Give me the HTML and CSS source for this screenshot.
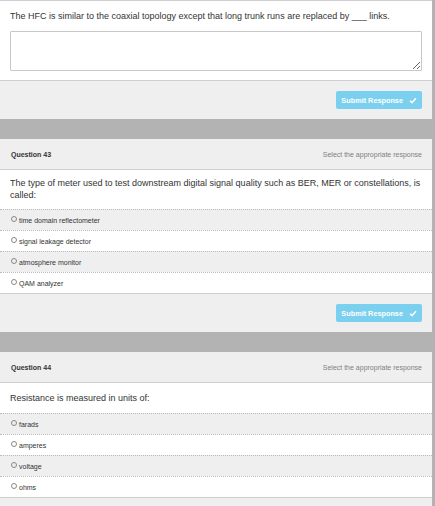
FILE: index.html
```html
<!DOCTYPE html>
<html lang="en">
<head>
  <meta charset="UTF-8">
  <title>Quiz</title>
  <link rel="stylesheet" href="styles.css">
</head>
<body>
  <div class="page">
    <div class="card card-cut">
      <div class="prompt prompt-fill">The HFC is similar to the coaxial topology except that long trunk runs are replaced by ___ links.</div>
      <div class="answer-box">
        <textarea class="answer"></textarea>
      </div>
      <div class="card-foot">
        <button class="btn">Submit Response
          <svg width="8" height="7" viewBox="0 0 8 7"><path d="M1 3.8 L3 5.6 L7 1.2" fill="none" stroke="white" stroke-width="1.5"/></svg>
        </button>
      </div>
    </div>

    <div class="card">
      <div class="card-head">
        <span class="qnum">Question 43</span>
        <span class="hint">Select the appropriate response</span>
      </div>
      <div class="prompt prompt-long">The type of meter used to test downstream digital signal quality such as BER, MER or constellations, is called:</div>
      <ul class="options">
        <li><span class="radio"></span>time domain reflectometer</li>
        <li><span class="radio"></span>signal leakage detector</li>
        <li><span class="radio"></span>atmosphere monitor</li>
        <li><span class="radio"></span>QAM analyzer</li>
      </ul>
      <div class="card-foot">
        <button class="btn">Submit Response
          <svg width="8" height="7" viewBox="0 0 8 7"><path d="M1 3.8 L3 5.6 L7 1.2" fill="none" stroke="white" stroke-width="1.5"/></svg>
        </button>
      </div>
    </div>

    <div class="card">
      <div class="card-head">
        <span class="qnum">Question 44</span>
        <span class="hint">Select the appropriate response</span>
      </div>
      <div class="prompt">Resistance is measured in units of:</div>
      <ul class="options">
        <li><span class="radio"></span>farads</li>
        <li><span class="radio"></span>amperes</li>
        <li><span class="radio"></span>voltage</li>
        <li><span class="radio"></span>ohms</li>
      </ul>
      <div class="card-foot">
        <button class="btn">Submit Response
          <svg width="8" height="7" viewBox="0 0 8 7"><path d="M1 3.8 L3 5.6 L7 1.2" fill="none" stroke="white" stroke-width="1.5"/></svg>
        </button>
      </div>
    </div>
  </div>
</body>
</html>
```

FILE: styles.css
```css
body {
  margin: 0;
  background: #b3b3b3;
  font-family: 'Liberation Sans', Arial, sans-serif;
  color: #333;
}
.page {
  width: 432px;
}
.card {
  background: #efefef;
  margin-bottom: 20px;
}
.card-cut {
  border-top: 1px solid #cfcfcf;
}
.card-head {
  display: flex;
  justify-content: space-between;
  align-items: center;
  height: 30px;
  padding: 0 10px 0 11px;
  border-bottom: 1px solid #cdd0d0;
  font-size: 7px;
}
.qnum {
  font-weight: bold;
}
.hint {
  color: #808080;
}
.prompt {
  background: #fff;
  font-size: 9px;
  line-height: 12px;
  padding: 9px 10px;
}
.prompt-fill {
  padding: 9px 10px;
}
.prompt-long {
  padding: 7px 10px 8px;
}
.answer-box {
  background: #fff;
  padding: 0 10px 9px;
  border-bottom: 1px solid #cdd0d0;
}
.answer {
  display: block;
  box-sizing: border-box;
  width: 100%;
  height: 40px;
  margin: 0;
  border: 1px solid #c8c8c8;
  border-radius: 1px;
}
.options {
  list-style: none;
  margin: 0;
  padding: 0;
  border-bottom: 1px solid #cdd0d0;
}
.options li {
  display: flex;
  align-items: center;
  height: 20px;
  padding-left: 11px;
  border-top: 1px dotted #bbb;
  font-size: 7px;
  background: #efefef;
}
.options li:nth-child(even) {
  background: #fff;
}
.radio {
  width: 4px;
  height: 4px;
  border: 0.8px solid #888;
  border-radius: 50%;
  margin-right: 2px;
  margin-top: -2px;
}
.card-foot {
  display: flex;
  justify-content: flex-end;
  padding: 10px;
}
.btn {
  display: flex;
  align-items: center;
  gap: 6px;
  height: 18px;
  padding: 0 5px;
  border: none;
  border-radius: 2px;
  background: #7ad0ee;
  color: #fff;
  font-family: 'Liberation Sans', Arial, sans-serif;
  font-size: 7.3px;
  font-weight: bold;
}
```
